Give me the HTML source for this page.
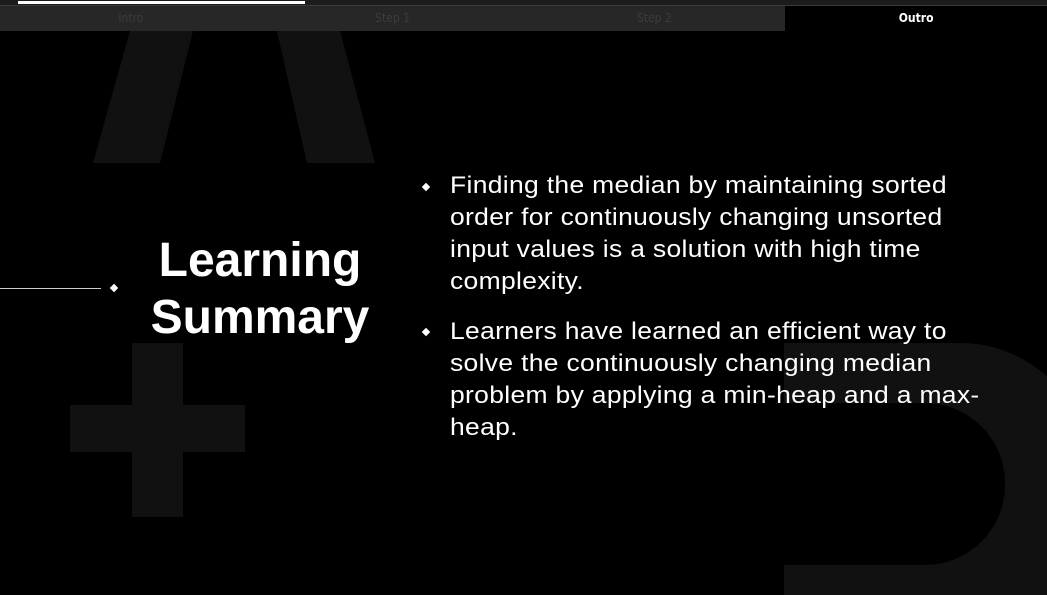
<!DOCTYPE html>
<html><head><meta charset="utf-8"><style>
html,body{margin:0;padding:0;background:#000;width:1047px;height:595px;overflow:hidden;font-family:"Liberation Sans",sans-serif;}
.abs{position:absolute;}
.tabs{top:6px;left:0;width:1047px;height:25px;background:#272727;display:flex;}
.tab{flex:1;text-align:center;font-size:12px;line-height:25px;color:#3c3c3c;font-family:"DejaVu Sans Condensed","DejaVu Sans",sans-serif;}
.tab.on{background:#000;color:#fff;font-weight:bold;}
.title{left:130px;width:260px;top:232px;text-align:center;color:#fff;font-weight:bold;font-size:48px;line-height:57px;letter-spacing:0px;}
.txt{position:absolute;left:450px;top:170px;color:#fff;font-size:24.5px;line-height:32px;letter-spacing:0.3px;transform:scaleX(1.08);transform-origin:0 0;white-space:nowrap;}
.txt p{margin:0 0 18px 0;}
.dia{position:absolute;width:6px;height:6px;background:#fff;transform:rotate(45deg);}
</style></head><body>
<svg class="abs" style="left:0;top:0" width="1047" height="595">
<rect x="0" y="0" width="1047" height="6" fill="#1c1c1c"/>
<rect x="0" y="5" width="1047" height="1" fill="#3a3a3a"/>
<rect x="18" y="1" width="287" height="3" fill="#fff"/>
<polygon points="93,163 160,163 193,31 277,31 307,163 375,163 340,31 130,31" fill="#111"/>
<rect x="132" y="343" width="51" height="174" fill="#111"/>
<rect x="70" y="405" width="175" height="47" fill="#111"/>
<path d="M784 343 H960 A130 130 0 0 1 1090 473 V595 H784 V565 H925 A80 80 0 0 0 1005 485 V483 A80 80 0 0 0 925 403 H784 Z" fill="#111"/>
<rect x="0" y="288" width="101" height="1" fill="#ccc"/>
<rect x="111" y="285" width="6" height="6" fill="#fff" transform="rotate(45 114 288)"/>
</svg>
<div class="abs tabs"><div class="tab">Intro</div><div class="tab">Step 1</div><div class="tab">Step 2</div><div class="tab on">Outro</div></div>
<div class="abs title">Learning<br>Summary</div>
<div class="dia" style="left:423px;top:184px"></div>
<div class="dia" style="left:423px;top:329px"></div>
<div class="txt">
<p>Finding the median by maintaining sorted<br>order for continuously changing unsorted<br>input values is a solution with high time<br>complexity.</p>
<p>Learners have learned an efficient way to<br>solve the continuously changing median<br>problem by applying a min-heap and a max-<br>heap.</p>
</div>
</body></html>
